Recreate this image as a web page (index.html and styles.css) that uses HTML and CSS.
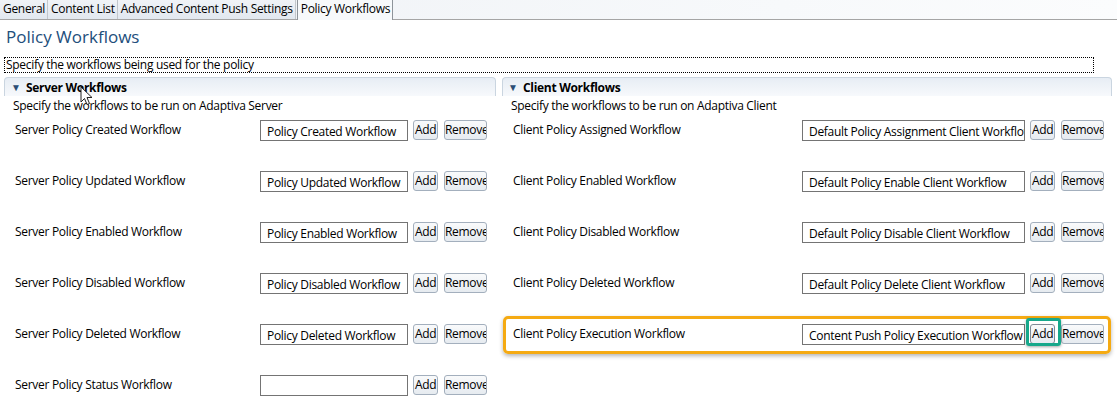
FILE: index.html
```html
<!DOCTYPE html>
<html lang="en">
<head>
    <meta charset="UTF-8">
    <title>Policy Workflows</title>
    <link rel="stylesheet" href="styles.css">
</head>
<body>

    <!-- Editor tabs -->
    <div class="tab-bar">
        <div class="tab">General</div>
        <div class="tab">Content List</div>
        <div class="tab">Advanced Content Push Settings</div>
        <div class="tab tab-active">Policy Workflows</div>
    </div>

    <h1 class="page-title">Policy Workflows</h1>

    <div class="page-hint">Specify the workflows being used for the policy</div>

    <div class="columns">

        <!-- Server side -->
        <div class="section section-server">
            <div class="section-header">
                <span class="twisty">&#9660;</span>Server Workflows
                <svg class="cursor" width="13" height="20" viewBox="0 0 13 20">
                    <path d="M1 1 L1 16 L4.5 12.5 L7 18.5 L9.5 17.5 L7 11.5 L12 11.5 Z" fill="#fff" stroke="#222" stroke-width="1"/>
                </svg>
            </div>
            <div class="section-desc">Specify the workflows to be run on Adaptiva Server</div>

            <div class="row">
                <div class="row-label">Server Policy Created Workflow</div>
                <div class="field">Policy Created Workflow</div>
                <button class="btn btn-add">Add</button>
                <button class="btn btn-remove">Remove</button>
            </div>
            <div class="row">
                <div class="row-label">Server Policy Updated Workflow</div>
                <div class="field">Policy Updated Workflow</div>
                <button class="btn btn-add">Add</button>
                <button class="btn btn-remove">Remove</button>
            </div>
            <div class="row">
                <div class="row-label">Server Policy Enabled Workflow</div>
                <div class="field">Policy Enabled Workflow</div>
                <button class="btn btn-add">Add</button>
                <button class="btn btn-remove">Remove</button>
            </div>
            <div class="row">
                <div class="row-label">Server Policy Disabled Workflow</div>
                <div class="field">Policy Disabled Workflow</div>
                <button class="btn btn-add">Add</button>
                <button class="btn btn-remove">Remove</button>
            </div>
            <div class="row">
                <div class="row-label">Server Policy Deleted Workflow</div>
                <div class="field">Policy Deleted Workflow</div>
                <button class="btn btn-add">Add</button>
                <button class="btn btn-remove">Remove</button>
            </div>
            <div class="row">
                <div class="row-label">Server Policy Status Workflow</div>
                <div class="field"></div>
                <button class="btn btn-add">Add</button>
                <button class="btn btn-remove">Remove</button>
            </div>
        </div>

        <!-- Client side -->
        <div class="section section-client">
            <div class="section-header">
                <span class="twisty">&#9660;</span>Client Workflows
            </div>
            <div class="section-desc">Specify the workflows to be run on Adaptiva Client</div>

            <div class="row">
                <div class="row-label">Client Policy Assigned Workflow</div>
                <div class="field">Default Policy Assignment Client Workflow</div>
                <button class="btn btn-add">Add</button>
                <button class="btn btn-remove">Remove</button>
            </div>
            <div class="row">
                <div class="row-label">Client Policy Enabled Workflow</div>
                <div class="field">Default Policy Enable Client Workflow</div>
                <button class="btn btn-add">Add</button>
                <button class="btn btn-remove">Remove</button>
            </div>
            <div class="row">
                <div class="row-label">Client Policy Disabled Workflow</div>
                <div class="field">Default Policy Disable Client Workflow</div>
                <button class="btn btn-add">Add</button>
                <button class="btn btn-remove">Remove</button>
            </div>
            <div class="row">
                <div class="row-label">Client Policy Deleted Workflow</div>
                <div class="field">Default Policy Delete Client Workflow</div>
                <button class="btn btn-add">Add</button>
                <button class="btn btn-remove">Remove</button>
            </div>
            <!-- Highlighted row -->
            <div class="row row-highlight">
                <div class="row-label">Client Policy Execution Workflow</div>
                <div class="field">Content Push Policy Execution Workflow</div>
                <button class="btn btn-add btn-marked">Add</button>
                <button class="btn btn-remove">Remove</button>
            </div>
        </div>

    </div>

</body>
</html>
```

FILE: styles.css
```css
body {
    font-family: "Open Sans", "Noto Sans", Arial, sans-serif;
    font-size: 12px;
    letter-spacing: -0.3px;
    color: #000;
    background-color: #fff;
    margin: 0;
    padding: 0;
    overflow: hidden;
}

/* Tab bar */
.tab-bar {
    display: flex;
    height: 19px;
    border-bottom: 1px solid #a5a5a5;
    background: linear-gradient(to right, #eef1f5, #f7f9fb 70%, #fbfcfd);
}

.tab {
    height: 19px;
    line-height: 18px;
    padding: 0 2px 0 3px;
    border-right: 1px solid #c2c7cc;
    background: linear-gradient(to bottom, #f0f3f7, #e2e8ef);
    white-space: nowrap;
}

.tab-active {
    background: #f7f9fb;
    border-left: 1px solid #8e949a;
    border-right: 1px solid #8e949a;
    height: 20px;
    margin-left: 1px;
}

/* Title */
.page-title {
    margin: 0;
    padding: 6px 0 0 6px;
    height: 30px;
    font-size: 17px;
    font-weight: normal;
    letter-spacing: 0;
    color: #224e7b;
    line-height: 22px;
}

.page-hint {
    margin: 1px 0 0 4px;
    width: 1087px;
    height: 14px;
    line-height: 13px;
    border: 1px dotted #000;
    padding-left: 1px;
}

/* Two columns */
.columns {
    display: grid;
    grid-template-columns: 492px 610px;
    gap: 6px;
    margin: 4px 0 0 4px;
}

.section-header {
    position: relative;
    height: 18px;
    line-height: 19px;
    border: 1px solid #cad5e0;
    border-bottom: none;
    border-radius: 4px 4px 0 0;
    background: linear-gradient(to bottom, #e7edf4, #f7f9fc);
    font-weight: bold;
    padding-left: 6px;
}

.section-client .section-header {
    padding-left: 5px;
}

.twisty {
    display: inline-block;
    font-size: 10px;
    color: #2b4d75;
    width: 15px;
    vertical-align: 1px;
}

.cursor {
    position: absolute;
    left: 75px;
    top: 8px;
}

.section-desc {
    height: 19px;
    line-height: 20px;
    padding-left: 9px;
}

/* Workflow rows */
.row {
    position: relative;
    display: flex;
    align-items: flex-start;
    height: 51px;
    padding: 5px 9px 0 11px;
    box-sizing: border-box;
}

.section-client .row {
    padding-right: 8px;
}

.row-label {
    flex: 1;
    line-height: 16px;
    padding-top: 2px;
}

.field {
    width: 140px;
    height: 19px;
    line-height: 21px;
    border: 1px solid #747474;
    padding: 0 0 0 6px;
    white-space: nowrap;
    overflow: hidden;
    margin-right: 5px;
}

.section-client .field {
    width: 215px;
}

.btn {
    font-family: inherit;
    font-size: 12px;
    letter-spacing: -0.3px;
    height: 20px;
    margin: 0;
    padding: 0 0 0 1px;
    text-align: left;
    overflow: hidden;
    white-space: nowrap;
    border: 1px solid #a3afbd;
    border-radius: 3px;
    background: linear-gradient(to bottom, #f9fafb, #e6ebf0);
    color: #000;
    line-height: 16px;
}

.btn-add {
    width: 25px;
    margin-right: 6px;
}

.btn-remove {
    width: 43px;
    padding-left: 0;
}

/* Highlight around the execution workflow row */
.row-highlight::before {
    content: "";
    position: absolute;
    left: 1px;
    top: -3px;
    right: 1px;
    height: 38px;
    box-sizing: border-box;
    border: 3px solid #f5aa12;
    border-radius: 5px;
    box-shadow: 0 2px 4px rgba(0, 0, 0, 0.3);
    pointer-events: none;
}

.btn-marked {
    position: relative;
    overflow: visible;
    border-color: #7f8a96;
}

.btn-marked::after {
    content: "";
    position: absolute;
    left: -5px;
    top: -7px;
    width: 29px;
    height: 22px;
    border: 3px solid #17a88b;
    border-radius: 3px;
    box-shadow: 0 1px 3px rgba(0, 0, 0, 0.35);
}
```
